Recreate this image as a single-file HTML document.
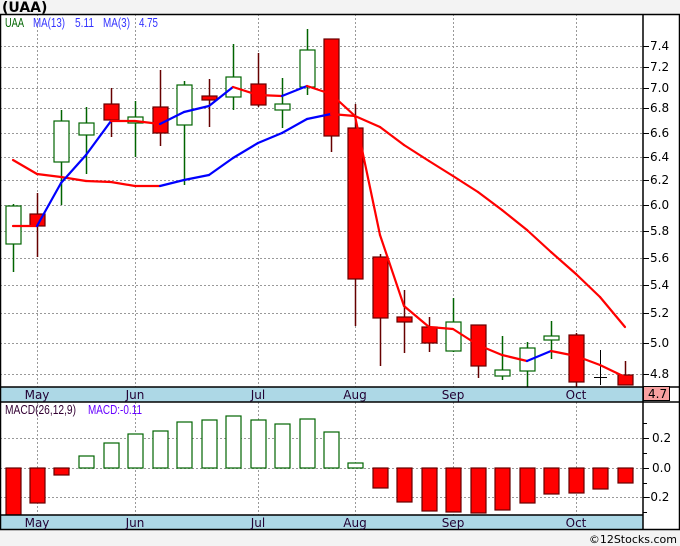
<!DOCTYPE html>
<html><head><meta charset="utf-8"><style>
html,body{margin:0;padding:0;background:#f3f3f3;}
body{width:680px;height:546px;overflow:hidden;position:relative;font-family:"Liberation Sans","DejaVu Sans",sans-serif;}
svg{position:absolute;left:0;top:0;}
</style></head><body>
<svg id="s" width="680" height="546" xmlns="http://www.w3.org/2000/svg" font-family="DejaVu Sans, Liberation Sans, sans-serif">
<rect x="0" y="14" width="680" height="516" fill="#fff"/>
<text x="2" y="12" font-size="14" font-weight="bold" fill="#000">(UAA)</text>
<g id="grid" stroke="#999" stroke-width="1" stroke-dasharray="2,2"></g>
<g id="c"></g>
<rect x="0" y="387" width="643" height="15" fill="#add8e6"/>
<rect x="0" y="515" width="643" height="15" fill="#add8e6"/>
<g stroke="#000" stroke-width="1.5" fill="none">
<rect x="0.5" y="14.5" width="679" height="515"/>
<line x1="643" y1="14" x2="643" y2="530"/>
<line x1="0" y1="387" x2="680" y2="387"/>
<line x1="0" y1="402" x2="680" y2="402"/>
<line x1="0" y1="515" x2="643" y2="515"/>
</g>
<g id="lbl" font-size="11" fill="#000"></g>
<g font-family="Liberation Sans, sans-serif" font-size="12.5">
<text x="5" y="27" fill="#006400" textLength="19" lengthAdjust="spacingAndGlyphs">UAA</text>
<text x="33" y="27" fill="#3333ff" textLength="32" lengthAdjust="spacingAndGlyphs">MA(13)</text>
<text x="75" y="27" fill="#3333ff" textLength="19" lengthAdjust="spacingAndGlyphs">5.11</text>
<text x="103" y="27" fill="#3333ff" textLength="27" lengthAdjust="spacingAndGlyphs">MA(3)</text>
<text x="139" y="27" fill="#3333ff" textLength="19" lengthAdjust="spacingAndGlyphs">4.75</text>
<text x="5" y="414" fill="#330033" textLength="71" lengthAdjust="spacingAndGlyphs">MACD(26,12,9)</text>
<text x="88" y="414" fill="#6600ff" textLength="54" lengthAdjust="spacingAndGlyphs">MACD:-0.11</text>
</g>
<rect x="643.5" y="386.5" width="26" height="14" fill="#f7a0a0" stroke="#000"/>
<text x="648" y="398" font-size="12" fill="#000">4.7</text>
<text x="677" y="543" font-size="11" fill="#000" text-anchor="end">©12Stocks.com</text>
</svg>
<script>
var NS="http://www.w3.org/2000/svg";
function el(p,t,a){var e=document.createElementNS(NS,t);for(var k in a)e.setAttribute(k,a[k]);p.appendChild(e);return e;}
var g=document.getElementById('grid'),c=document.getElementById('c'),L=document.getElementById('lbl');
var pl=[[7.4,46],[7.2,67],[7.0,88],[6.8,108],[6.6,133],[6.4,157],[6.2,180],[6.0,205],[5.8,231],[5.6,258],[5.4,285],[5.2,313],[5.0,343],[4.8,374]];
pl.forEach(function(p){el(g,'line',{x1:0,x2:643,y1:p[1]+.5,y2:p[1]+.5});
el(L,'line',{x1:643,x2:649,y1:p[1]+.5,y2:p[1]+.5,stroke:'#000'});
var t=el(L,'text',{x:650,y:p[1]+4,'font-size':12});t.textContent=p[0].toFixed(1);});
[[0.2,438,'0.2'],[0,468,'0.0'],[-0.2,497,'-0.2']].forEach(function(p){el(g,'line',{x1:0,x2:643,y1:p[1]+.5,y2:p[1]+.5});
el(L,'line',{x1:643,x2:649,y1:p[1]+.5,y2:p[1]+.5,stroke:'#000'});
var t=el(L,'text',{x:p[2][0]=='-'?646:652,y:p[1]+4,'font-size':12});t.textContent=p[2];});
[423,453,483,512].forEach(function(y){el(L,'line',{x1:643,x2:647,y1:y+.5,y2:y+.5,stroke:'#000'});});
var mx=[[37,'May'],[135,'Jun'],[258,'Jul'],[355,'Aug'],[453,'Sep'],[576,'Oct']];
mx.forEach(function(m){el(g,'line',{x1:m[0]+.5,x2:m[0]+.5,y1:14,y2:515});
[399,527].forEach(function(y){var t=el(L,'text',{x:m[0],y:y,'font-size':12,'text-anchor':'middle',fill:'#220033'});t.textContent=m[1];});});
var X=[13,37,61,86,111,135,160,184,209,233,258,282,307,331,355,380,404,429,453,478,502,527,551,576,600,625];
var C=[['g',206,244,204,272],['r',214,226,193,257],['g',121,162,110,205],['g',123,135,107,174],['r',104,120,88,137],['g',117,123,101,157],['r',107,133,70,146],['g',85,125,81,185],['r',96,100,79,127],['g',77,97,44,110],['r',84,105,53,107],['g',104,110,78,128],['g',50,87,29,95],['r',39,136,39,152],['r',128,279,104,326],['r',257,318,254,366],['r',317,322,290,353],['r',327,343,317,352],['g',322,351,298,352],['r',325,366,325,378],['g',370,376,336,380],['g',348,371,342,387],['g',336,340,321,359],['r',335,382,333,387],['x',377,377,350,385],['r',375,385,361,385]];
C.forEach(function(d,i){var x=X[i];
if(d[0]=='x'){el(c,'line',{x1:x+.5,x2:x+.5,y1:d[3],y2:d[4],stroke:'#000'});el(c,'line',{x1:x-6,x2:x+7,y1:d[1]+.5,y2:d[1]+.5,stroke:'#000'});return;}
var col=d[0]=='g'?'#006400':'#660000';
el(c,'line',{x1:x+.5,x2:x+.5,y1:d[3],y2:d[4],stroke:col,'stroke-width':1.5});
el(c,'rect',{x:x-7,y:d[1],width:15,height:Math.max(d[2]-d[1],2),fill:d[0]=='g'?'#fff':'#ff0000',stroke:col,'stroke-width':1.2});});
function line(pts){for(var i=1;i<pts.length;i++){var col=pts[i][1]<pts[i-1][1]?'#0000ff':'#ff0000';
el(c,'line',{x1:pts[i-1][0],y1:pts[i-1][1],x2:pts[i][0],y2:pts[i][1],stroke:col,'stroke-width':2.2,'stroke-linecap':'round'});}}
line([[13,160],[37,174],[61,177],[86,181],[111,182],[135,186],[160,186],[184,180],[209,175],[233,158],[258,143],[282,133],[307,119],[331,114],[355,116],[380,127],[404,145],[429,161],[453,176],[478,192],[502,210],[527,230],[551,252],[576,274],[600,297],[625,327]]);
line([[13,226],[37,226],[61,183],[86,155],[111,121],[135,121],[160,124],[184,112],[209,106],[233,87],[258,95],[282,96],[307,86],[331,94],[355,116],[380,235],[404,306],[429,327],[453,329],[478,345],[502,355],[527,361],[551,351],[576,356],[600,365],[625,377]]);
var M=[[468,515,'r'],[468,503,'r'],[468,475,'r'],[456,468,'g'],[443,468,'g'],[434,468,'g'],[431,468,'g'],[422,468,'g'],[420,468,'g'],[416,468,'g'],[420,468,'g'],[424,468,'g'],[419,468,'g'],[432,468,'g'],[463,468,'g'],[468,488,'r'],[468,502,'r'],[468,511,'r'],[468,512,'r'],[468,513,'r'],[468,510,'r'],[468,503,'r'],[468,494,'r'],[468,493,'r'],[468,489,'r'],[468,483,'r']];
M.forEach(function(d,i){var x=X[i];el(c,'rect',{x:x-7,y:d[0],width:15,height:d[1]-d[0],fill:d[2]=='g'?'#fff':'#ff0000',stroke:d[2]=='g'?'#006400':'#660000','stroke-width':1.2});});
</script>
</body></html>
